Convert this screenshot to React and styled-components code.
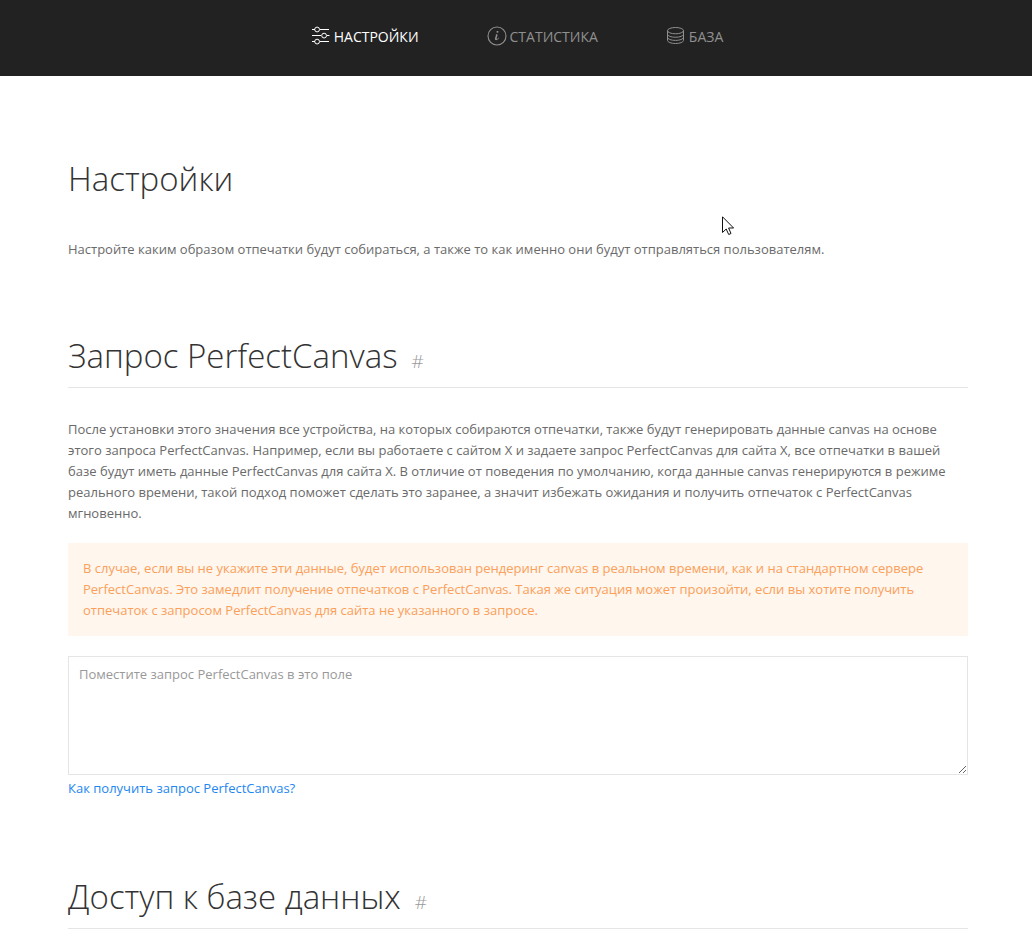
import React from 'react';
import styled, { createGlobalStyle } from 'styled-components';

const GlobalStyle = createGlobalStyle`
  *, *::before, *::after { box-sizing: border-box; }
  html { overflow: hidden; background: #fff; }
  body {
    margin: 0;
    font-family: "Open Sans", "Noto Sans", sans-serif;
    font-size: 13px;
    line-height: 21px;
    color: #6a6a6a;
  }
`;

const NavBar = styled.nav`
  display: flex;
  justify-content: center;
  gap: 68px;
  height: 76px;
  padding: 0 0 4px 2px;
  background: #222;
  font-size: 14px;
`;

const NavLink = styled.a`
  display: flex;
  align-items: center;
  gap: 3px;
  color: ${(p) => (p.$active ? '#fff' : '#909090')};
  text-decoration: none;
  text-transform: uppercase;
  svg { flex: none; }
`;

const Content = styled.main`
  padding: 81px 64px 0 68px;
`;

const Title = styled.h1`
  margin: 0;
  font-size: 33px;
  line-height: 44px;
  font-weight: 300;
  color: #333;
`;

const Intro = styled.p`
  margin: 38px 0 0;
`;

const Section = styled.section`
  margin-top: 74px;
`;

const SectionTitle = styled.h2`
  display: flex;
  align-items: baseline;
  gap: 14px;
  margin: 0;
  padding-bottom: 9px;
  border-bottom: 1px solid #e5e5e5;
  font-size: 33px;
  line-height: 44px;
  font-weight: 300;
  color: #333;
`;

const Anchor = styled.a`
  font-size: 19px;
  line-height: 24px;
  color: #999;
  text-decoration: none;
`;

const Text = styled.p`
  margin: 31px 0 0;
`;

const Alert = styled.div`
  margin-top: 19px;
  padding: 15px;
  background: #fff6ee;
  color: #faa05a;
`;

const Field = styled.textarea`
  display: block;
  width: 100%;
  height: 119px;
  margin-top: 20px;
  padding: 7px 10px;
  border: 1px solid #e5e5e5;
  border-radius: 0;
  background: #fff;
  color: #666;
  font: inherit;
  outline: none;
  resize: vertical;
  &::placeholder { color: #999; opacity: 1; }
`;

const Help = styled.p`
  margin: 3px 0 0;
  padding-bottom: 2px;
`;

const HelpLink = styled.a`
  color: #1e87f0;
  text-decoration: none;
`;

const Pointer = styled.svg`
  position: absolute;
  left: 722px;
  top: 216px;
`;

const SettingsIcon = () => (
  <svg width="20" height="20" viewBox="0 0 20 20" fill="none" stroke="currentColor" aria-hidden="true">
    <circle cx="6.1" cy="3.5" r="2.4" />
    <circle cx="13.1" cy="9.6" r="2.4" />
    <circle cx="6.1" cy="15.6" r="2.4" />
    <path d="M1 3.5h3M9 3.5h9M1 9.5h9M16 9.5h2.5M1 15.5h3M9 15.5h9" />
  </svg>
);

const InfoIcon = () => (
  <svg width="20" height="20" viewBox="0 0 20 20" aria-hidden="true">
    <path fill="currentColor" d="M12.13,11.59 C11.97,12.84 10.35,14.12 9.1,14.16 C6.17,14.2 9.89,9.46 8.74,8.37 C9.3,8.16 10.62,7.83 10.62,8.81 C10.62,9.63 10.12,10.55 9.88,11.32 C8.66,15.16 12.13,11.15 12.14,11.18 C12.16,11.21 12.16,11.35 12.13,11.59 Z M11.56,5.67 C11.56,6.67 9.36,7.15 9.36,6.03 C9.36,5 11.56,4.54 11.56,5.67 Z" />
    <circle cx="10" cy="10" r="9" fill="none" stroke="currentColor" strokeWidth="1.1" />
  </svg>
);

const DatabaseIcon = () => (
  <svg width="20" height="20" viewBox="0 0 20 20" fill="none" stroke="currentColor" aria-hidden="true">
    <ellipse cx="9.5" cy="4.64" rx="8" ry="3.14" />
    <path d="M17.5,8.11 C17.5,9.85 13.92,11.25 9.5,11.25 C5.08,11.25 1.5,9.84 1.5,8.11" />
    <path d="M17.5,11.25 C17.5,12.99 13.92,14.39 9.5,14.39 C5.08,14.39 1.5,12.98 1.5,11.25" />
    <path d="M17.5,4.64 V14.36 C17.5,16.1 13.92,17.5 9.5,17.5 C5.08,17.5 1.5,16.09 1.5,14.36 V4.64" />
  </svg>
);

const Cursor = () => (
  <Pointer width="13" height="20" viewBox="0 0 13 20" aria-hidden="true">
    <path d="M.5 .8V16.5L4.2 13L6.7 18.5L9 17.5L6.6 12H11.6Z" fill="#fff" stroke="#111" strokeWidth="1" />
  </Pointer>
);

const Heading = ({ id, children }) => (
  <SectionTitle id={id}>
    {children}
    <Anchor href={`#${id}`}>#</Anchor>
  </SectionTitle>
);

export default function App() {
  return (
    <>
      <GlobalStyle />
      <NavBar>
        <NavLink href="#settings" $active><SettingsIcon />Настройки</NavLink>
        <NavLink href="#stats"><InfoIcon />Статистика</NavLink>
        <NavLink href="#base"><DatabaseIcon />База</NavLink>
      </NavBar>
      <Content>
        <Title>Настройки</Title>
        <Intro>
          Настройте каким образом отпечатки будут собираться, а также то как именно они будут отправляться пользователям.
        </Intro>
        <Section>
          <Heading id="request">Запрос PerfectCanvas</Heading>
          <Text>
            После установки этого значения все устройства, на которых собираются отпечатки, также будут генерировать данные canvas на основе этого запроса PerfectCanvas. Например, если вы работаете с сайтом X и задаете запрос PerfectCanvas для сайта X, все отпечатки в вашей базе будут иметь данные PerfectCanvas для сайта X. В отличие от поведения по умолчанию, когда данные canvas генерируются в режиме реального времени, такой подход поможет сделать это заранее, а значит избежать ожидания и получить отпечаток с PerfectCanvas мгновенно.
          </Text>
          <Alert>
            В случае, если вы не укажите эти данные, будет использован рендеринг canvas в реальном времени, как и на стандартном сервере PerfectCanvas. Это замедлит получение отпечатков с PerfectCanvas. Такая же ситуация может произойти, если вы хотите получить отпечаток с запросом PerfectCanvas для сайта не указанного в запросе.
          </Alert>
          <Field aria-label="Запрос PerfectCanvas" placeholder="Поместите запрос PerfectCanvas в это поле" />
          <Help>
            <HelpLink href="#help">Как получить запрос PerfectCanvas?</HelpLink>
          </Help>
        </Section>
        <Section>
          <Heading id="access">Доступ к базе данных</Heading>
        </Section>
      </Content>
      <Cursor />
    </>
  );
}
